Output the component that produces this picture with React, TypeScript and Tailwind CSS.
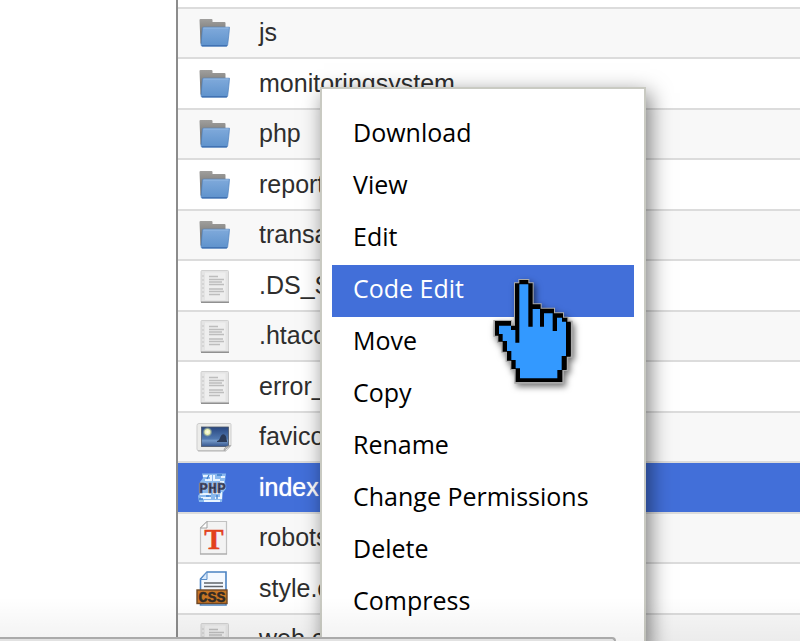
import type { ReactNode } from "react";

function Icon({ children }: { children: ReactNode }) {
  return (
    <svg viewBox="0 0 36 36" className="h-9 w-9 shrink-0" aria-hidden="true">
      {children}
    </svg>
  );
}

function FolderIcon() {
  return (
    <Icon>
      <defs>
        <linearGradient id="folderBack" x1="0" y1="0" x2="0" y2="1">
          <stop offset="0" stopColor="#a09f9d" />
          <stop offset="1" stopColor="#5e5e5c" />
        </linearGradient>
        <linearGradient id="folderFront" x1="0" y1="0" x2="0" y2="1">
          <stop offset="0" stopColor="#80aadb" />
          <stop offset="1" stopColor="#5e92cc" />
        </linearGradient>
      </defs>
      <path d="M3.500 5q0-1 1-1h11q1 0 1 1v2h12q1 0 1 1V29H5.500q-1 0-1-1z" fill="url(#folderBack)" />
      <path d="M7.500 12.200h26l-.5 6-1.300 11.500q-.2 1.500-1.500 1.500H6.200q-1.200 0-1.100-1.500l1.300-16.500q.1-1 1.100-1z" fill="url(#folderFront)" stroke="#4d80bd" strokeWidth="0.700" />
      <path d="M7.500 13h25" stroke="#9dbfe6" strokeWidth="0.800" />
      <path d="M6 30.700h25" stroke="#3f70b0" strokeWidth="1.200" />
    </Icon>
  );
}

function DocumentIcon() {
  return (
    <Icon>
      <rect x="5" y="2.500" width="27.500" height="32" rx="1" fill="#e4e4e4" stroke="#d0d0d0" strokeWidth="1" />
      <rect x="9" y="4.500" width="20.500" height="27.500" fill="#eeeeee" />
      <path d="M5 34.200h28" stroke="#8a8a8a" strokeWidth="1.400" />
      <path d="M6 8h2M6 12h2M6 16h2M6 20h2M6 24h2M6 28h2" stroke="#c4c4c4" strokeWidth="1.200" />
      <path d="M13 8.500h9M13 11.500h15M13 14h13M13 16.500h15M13 21h14M13 23.500h15M13 26.500h11" stroke="#bdbdbd" strokeWidth="1.400" />
    </Icon>
  );
}

function ImageIcon() {
  return (
    <Icon>
      <defs>
        <linearGradient id="nightSky" x1="0" y1="0" x2="0" y2="1">
          <stop offset="0" stopColor="#28467f" />
          <stop offset="0.6" stopColor="#5078b0" />
          <stop offset="0.7" stopColor="#7398c6" />
          <stop offset="1" stopColor="#34548d" />
        </linearGradient>
        <radialGradient id="moon">
          <stop offset="0" stopColor="#fffff0" />
          <stop offset="0.5" stopColor="#e9efb0" />
          <stop offset="1" stopColor="#a9bd8d" stopOpacity="0" />
        </radialGradient>
      </defs>
      <path d="M3 4.500h31q1 0 1 1V27l-5 5H3q-2 0-2-2V6.500q0-2 2-2z" fill="#ececea" stroke="#cdcdcd" strokeWidth="1" />
      <path d="M2 31.800h28" stroke="#b5b5b5" strokeWidth="1" />
      <rect x="5.500" y="8" width="27" height="19.500" fill="url(#nightSky)" stroke="#4c5869" strokeWidth="0.800" />
      <circle cx="11.500" cy="13" r="5" fill="url(#moon)" />
      <path d="M21 22c2-1 2-1 3-3 1-3 3-5 5-3 2 2 1 4 2 6v1H21z" fill="#2a3a58" />
      <path d="M28 31.500q0-4 6.500-5z" fill="#c8c8c8" stroke="#999" strokeWidth="0.800" />
    </Icon>
  );
}

function PhpIcon() {
  return (
    <Icon>
      <path d="M6 3.500h24l-1 8 1 7-3 4-1 9.500H3l-1-6 3-5-1-9 3-4z" fill="#8ab9ee" />
      <path d="M7 6h8v4H9M18 5v5h6M25 7h4M4 24h10v4H5M17 23h8v5h-6M8 31h16M24 12h4" fill="none" stroke="#e8f4ff" strokeWidth="2" />
      <path d="M13 5l-2 4M21 5h5M10 26h5M21 25v4M3 29h4" stroke="#3e7fcc" strokeWidth="1.300" />
      <text x="16.500" y="23" textAnchor="middle" fill="#10183a" stroke="#10183a" strokeWidth="0.500" className="font-['Liberation_Mono'] text-[15px] font-bold">PHP</text>
    </Icon>
  );
}

function TextIcon() {
  return (
    <Icon>
      <path d="M11 1.500h19.500v32.500H4.500V8z" fill="#f3f3f3" stroke="#c2c2c2" strokeWidth="1.200" />
      <path d="M4.500 8L11 1.500V8z" fill="#fff" stroke="#999" strokeWidth="0.900" />
      <path d="M4 34h27" stroke="#a5a5a5" strokeWidth="1" />
      <text x="18" y="29" textAnchor="middle" fill="#e2421c" stroke="#e2421c" strokeWidth="0.400" className="font-['Liberation_Serif'] text-[29px] font-bold">T</text>
    </Icon>
  );
}

function CssIcon() {
  return (
    <Icon>
      <path d="M11 1h19v33H4.500V8z" fill="#f4f9ff" stroke="#4a82c2" strokeWidth="1.600" />
      <path d="M4.500 8.500H11V1z" fill="#d9e9fa" stroke="#5b8fca" strokeWidth="1" />
      <path d="M8 12h19M8 15.500h19" stroke="#5f656c" strokeWidth="1.400" />
      <rect x="1" y="19" width="30" height="13.500" fill="#c87524" stroke="#6e4726" strokeWidth="1.400" />
      <text x="16" y="30.500" textAnchor="middle" fill="#332b24" stroke="#332b24" strokeWidth="0.500" className="font-['Liberation_Mono'] text-[15px] font-bold">CSS</text>
    </Icon>
  );
}

type FileEntry = { name: string; icon: () => ReactNode; selected?: boolean };

const files: FileEntry[] = [
  { name: "js", icon: FolderIcon },
  { name: "monitoringsystem", icon: FolderIcon },
  { name: "php", icon: FolderIcon },
  { name: "reports", icon: FolderIcon },
  { name: "transactions", icon: FolderIcon },
  { name: ".DS_Store", icon: DocumentIcon },
  { name: ".htaccess", icon: DocumentIcon },
  { name: "error_log", icon: DocumentIcon },
  { name: "favicon.ico", icon: ImageIcon },
  { name: "index.php", icon: PhpIcon, selected: true },
  { name: "robots.txt", icon: TextIcon },
  { name: "style.css", icon: CssIcon },
  { name: "web.config", icon: DocumentIcon },
];

const actions = ["Download", "View", "Edit", "Code Edit", "Move", "Copy", "Rename", "Change Permissions", "Delete", "Compress"];

function FileList() {
  return (
    <ul className="min-w-0 flex-1 pt-[7px] font-['Liberation_Sans',Arial,sans-serif] text-[25px] leading-8 text-[#2e2e2e]">
      {files.map(({ name, icon: FileIcon, selected }) => (
        <li
          key={name}
          className={`flex items-center gap-[27px] border-t-2 border-[#dcdcdc] pl-[18px] odd:h-[50px] even:h-[51px] ${
            selected
              ? "bg-[#426fd9] text-white [text-shadow:0_0_1px_#fff]"
              : "odd:bg-[#f8f8f8] even:bg-white"
          }`}
        >
          <FileIcon />
          <span className="pb-0.5 whitespace-nowrap">{name}</span>
        </li>
      ))}
    </ul>
  );
}

function ContextMenu() {
  return (
    <div
      role="menu"
      className="absolute top-[87px] left-80 w-[326px] border-2 border-[#c9cac2] bg-white px-[10px] py-5 font-['Open_Sans','Noto_Sans',sans-serif] text-[25px] leading-8 text-black shadow-[4px_6px_20px_rgba(0,0,0,0.5)]"
    >
      {actions.map((action) => (
        <button
          key={action}
          type="button"
          role="menuitem"
          className={`block h-[52px] w-full px-[21px] pb-[7px] text-left whitespace-nowrap ${
            action === "Code Edit" ? "bg-[#426fd9] text-white" : ""
          }`}
        >
          {action}
        </button>
      ))}
    </div>
  );
}

function HandCursor() {
  return (
    <svg
      viewBox="0 0 330 390"
      className="pointer-events-none absolute top-[265px] left-[480px] h-[130px] w-[110px] drop-shadow-[2px_3px_3px_rgba(0,0,0,0.55)]"
      aria-hidden="true"
    >
      <path
        d="M118 45H145V55H158V118H182V131H222V145H249V158H262V170H275V275H262V315H249V353H106V312H93V287H80V260H67V230H54V212H43V168H93V182H105V55H118Z"
        fill="#000"
        stroke="#aaa"
        strokeWidth="6"
      />
      <path
        d="M118 45H145V55H158V118H182V131H222V145H249V158H262V170H272V275H260V315H247V351H107V312H94V287H81V260H68V230H55V212H45V168H93V182H105V55H118Z"
        fill="#000"
      />
      <path
        d="M118 58H145V185H158V132H180V185H192V145H218V198H231V158H246V170H258V273H245V315H232V340H120V310H107V285H94V258H81V228H68V207H57V182H93V195H106V233H118Z"
        fill="#3399ff"
      />
    </svg>
  );
}

export default function App() {
  return (
    <main className="relative flex h-screen overflow-hidden bg-white">
      <aside className="w-[178px] shrink-0 border-r-2 border-[#8c8c8c]" />
      <FileList />
      <ContextMenu />
      <HandCursor />
      <div className="pointer-events-none absolute inset-x-0 bottom-0 h-11 bg-linear-to-b from-transparent to-black/5" />
      <div className="absolute bottom-0 left-0 h-1 w-[616px] rounded-tr-md border-t-2 border-r-2 border-[#aaa] bg-[#e2e2e2]" />
    </main>
  );
}
